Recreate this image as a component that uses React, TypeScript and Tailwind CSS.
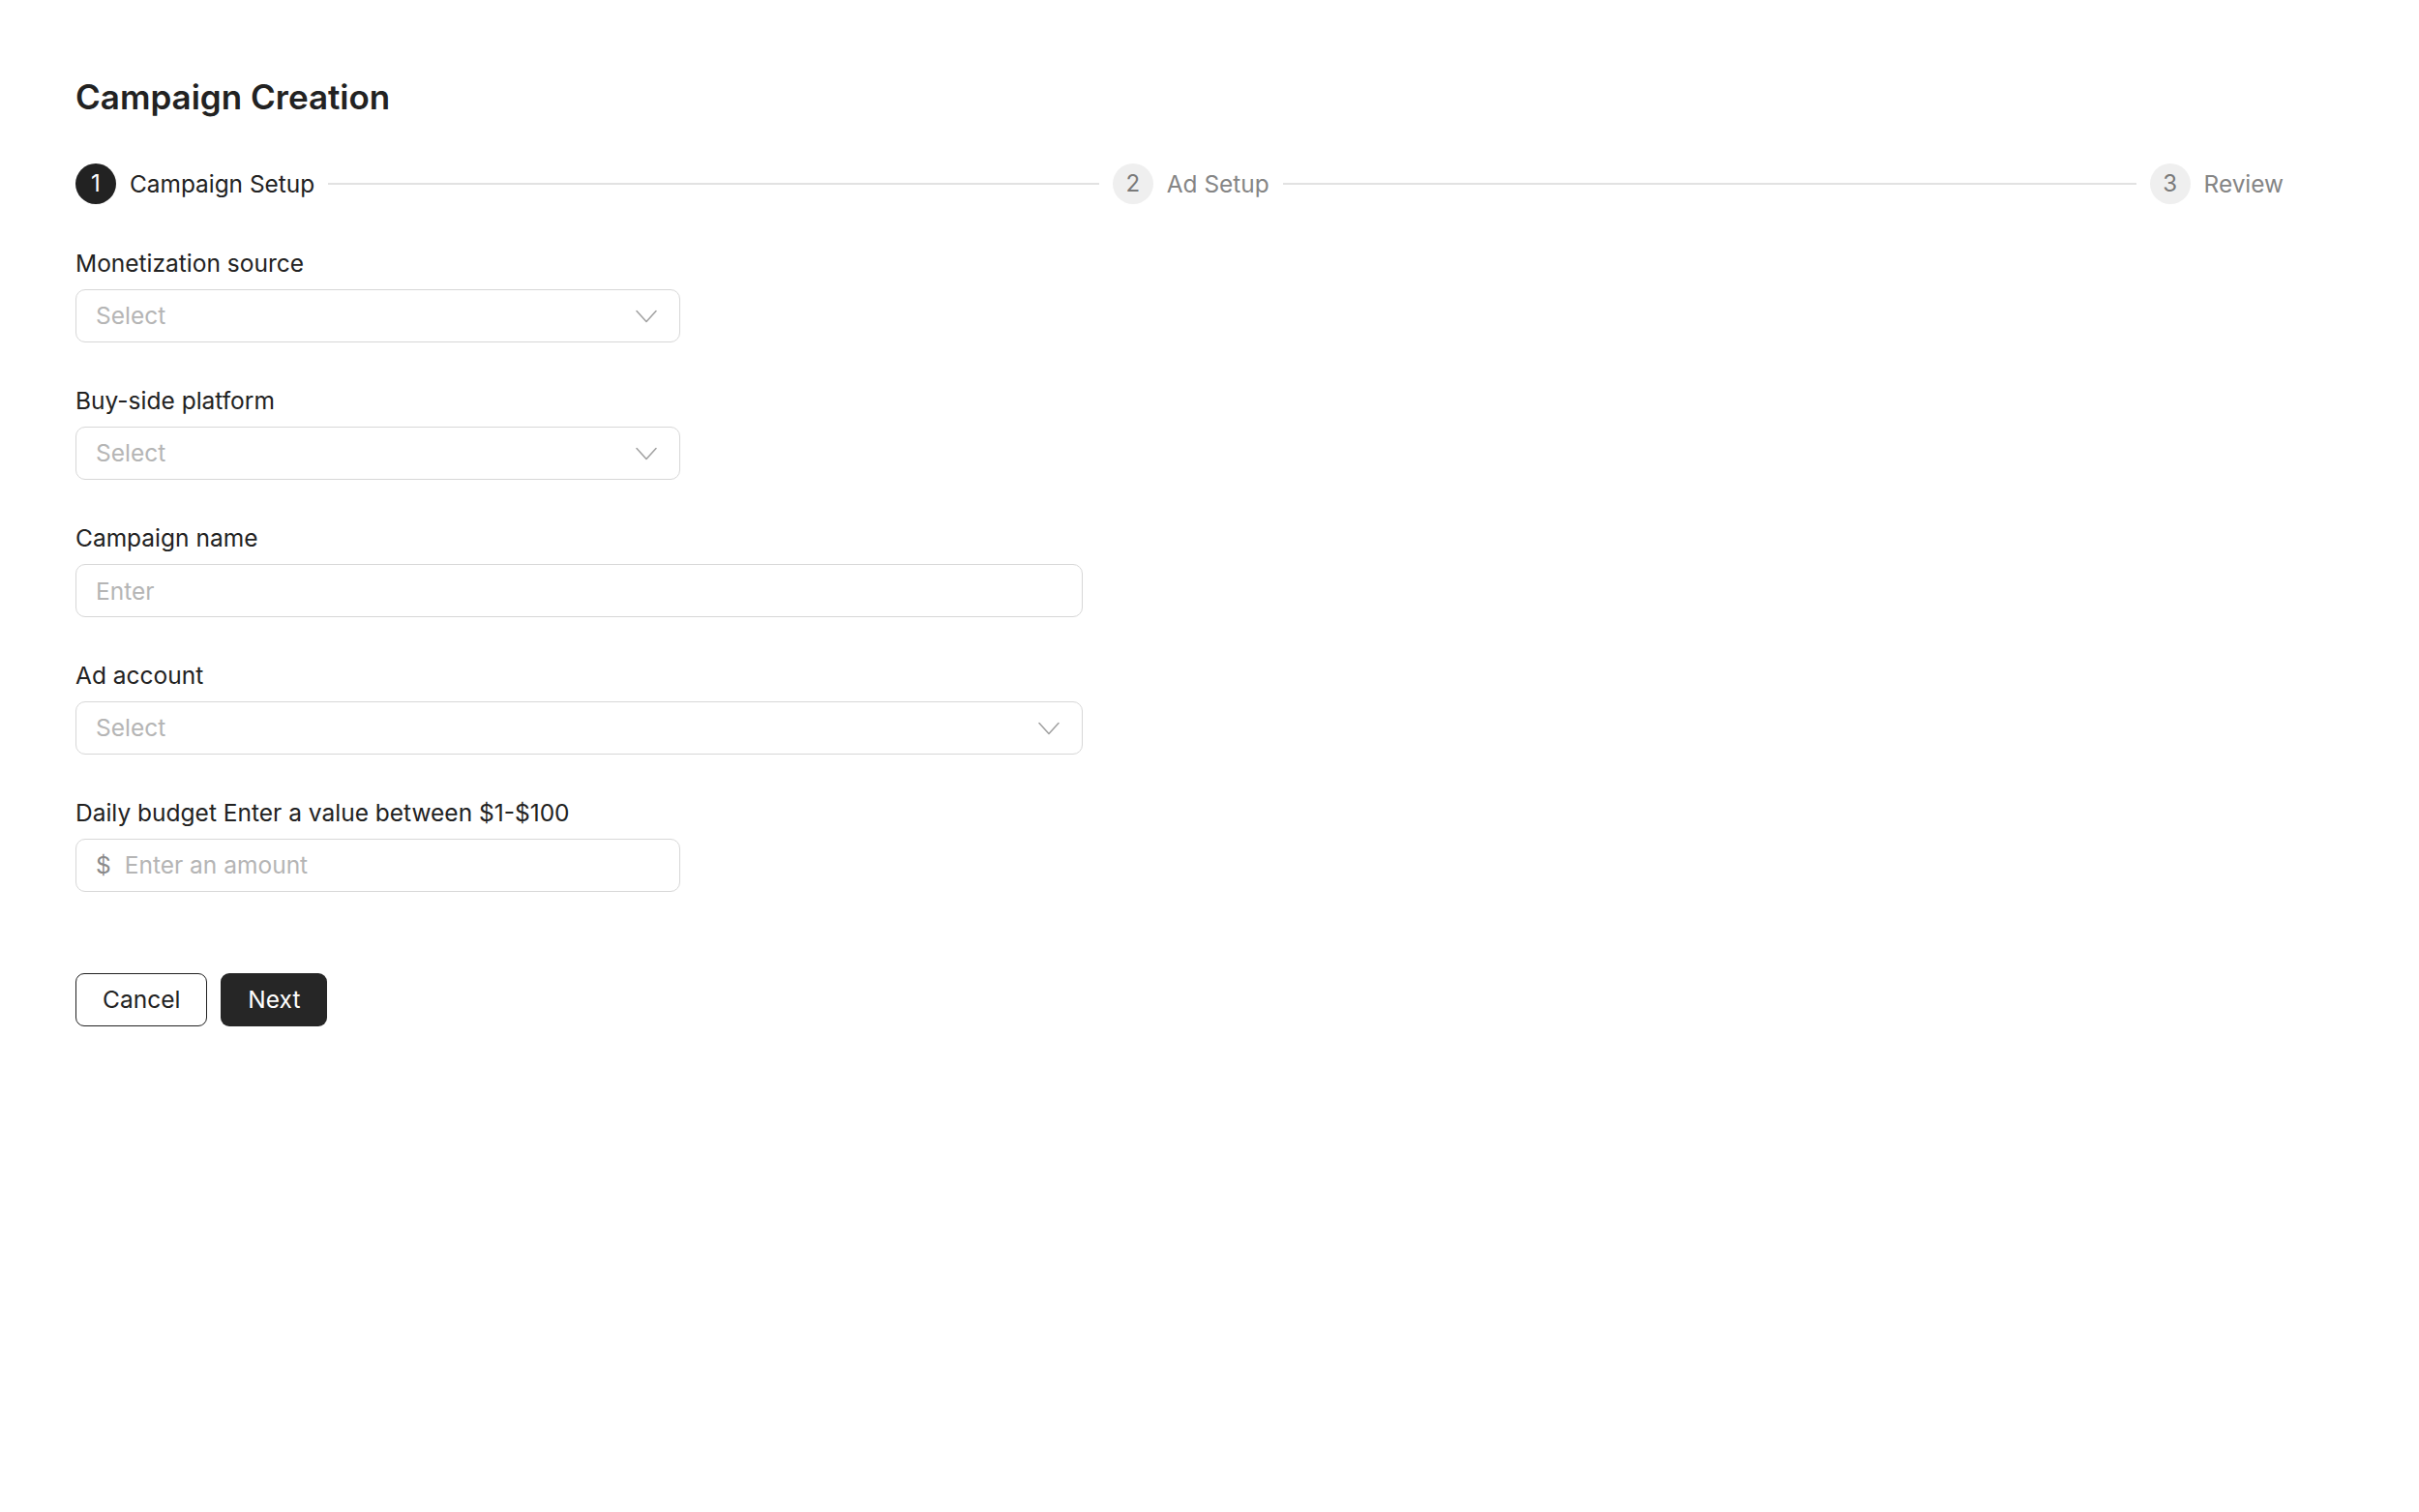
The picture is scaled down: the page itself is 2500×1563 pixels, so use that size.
import React from 'react';

const steps = [
    { n: 1, label: 'Campaign Setup' },
    { n: 2, label: 'Ad Setup' },
    { n: 3, label: 'Review' },
];

function Chevron() {
    return (
        <svg width="22" height="14" viewBox="0 0 22 14" fill="none" className="shrink-0">
            <polyline points="1,1.5 11,12.5 21,1.5" stroke="#a0a0a0" strokeWidth="1.5" strokeLinejoin="round" strokeLinecap="round" />
        </svg>
    );
}

function Stepper({ current }: { current: number }) {
    return (
        <div className="flex items-center gap-[14px]">
            {steps.map((s, i) => {
                const active = s.n === current;
                const last = i === steps.length - 1;
                return (
                    <div key={s.n} className={last ? 'flex items-center gap-[14px]' : 'flex flex-1 items-center gap-[14px]'}>
                        <div
                            className={
                                active
                                    ? 'flex h-[42px] w-[42px] shrink-0 items-center justify-center rounded-full bg-[#222222] text-[24px] text-white'
                                    : 'flex h-[42px] w-[42px] shrink-0 items-center justify-center rounded-full bg-[#efefef] text-[24px] text-[#7a7a7a]'
                            }
                        >
                            {s.n}
                        </div>
                        <span className={active ? 'whitespace-nowrap text-[24.4px] text-[#222222]' : 'whitespace-nowrap text-[24.4px] text-[#858585]'}>
                            {s.label}
                        </span>
                        {!last && <div className="h-[2px] flex-1 bg-[#e2e2e2]" />}
                    </div>
                );
            })}
        </div>
    );
}

function Field({ label, children }: { label: string; children: React.ReactNode }) {
    return (
        <div className="flex flex-col gap-3">
            <label className="text-[24.5px] leading-[30px] text-[#222222]">{label}</label>
            {children}
        </div>
    );
}

function SelectBox({ wide }: { wide?: boolean }) {
    return (
        <button
            type="button"
            className={
                (wide ? 'w-[1041px]' : 'w-[625px]') +
                ' flex h-[55px] items-center justify-between rounded-[10px] border-[1.5px] border-[#d7d7d7] bg-white pl-[20px] pr-[23px] text-left'
            }
        >
            <span className="text-[24.5px] text-[#b5b5b5]">Select</span>
            <Chevron />
        </button>
    );
}

export default function App() {
    return (
        <div className="min-h-screen bg-white pl-[78px] pr-[140px] pt-[79px] text-[#222222]" style={{ fontFamily: 'Inter, "Noto Sans", sans-serif' }}>
            <h1 className="text-[35px] font-semibold leading-[42px] text-[#222222]">Campaign Creation</h1>

            <div className="mt-[48px]">
                <Stepper current={1} />
            </div>

            <form className="mt-[46px] flex flex-col gap-[45px]" onSubmit={(e) => e.preventDefault()}>
                <Field label="Monetization source">
                    <SelectBox />
                </Field>
                <Field label="Buy-side platform">
                    <SelectBox />
                </Field>
                <Field label="Campaign name">
                    <input
                        placeholder="Enter"
                        className="h-[55px] w-[1041px] rounded-[10px] border-[1.5px] border-[#d7d7d7] px-[20px] text-[24.5px] outline-none placeholder:text-[#b5b5b5]"
                    />
                </Field>
                <Field label="Ad account">
                    <SelectBox wide />
                </Field>
                <Field label="Daily budget Enter a value between $1-$100">
                    <div className="flex h-[55px] w-[625px] items-center gap-[14px] rounded-[10px] border-[1.5px] border-[#d7d7d7] px-[20px]">
                        <span className="text-[24.5px] text-[#8a8a8a]">$</span>
                        <input
                            placeholder="Enter an amount"
                            className="flex-1 text-[24.5px] outline-none placeholder:text-[#b5b5b5]"
                        />
                    </div>
                </Field>

                <div className="mt-[39px] flex gap-[14px]">
                    <button type="button" className="h-[55px] rounded-[9px] border-[1.5px] border-[#222222] bg-white px-[27px] text-[24.5px] text-[#222222]">
                        Cancel
                    </button>
                    <button type="submit" className="h-[55px] rounded-[9px] bg-[#262626] px-[28px] text-[24.5px] text-white">
                        Next
                    </button>
                </div>
            </form>
        </div>
    );
}
